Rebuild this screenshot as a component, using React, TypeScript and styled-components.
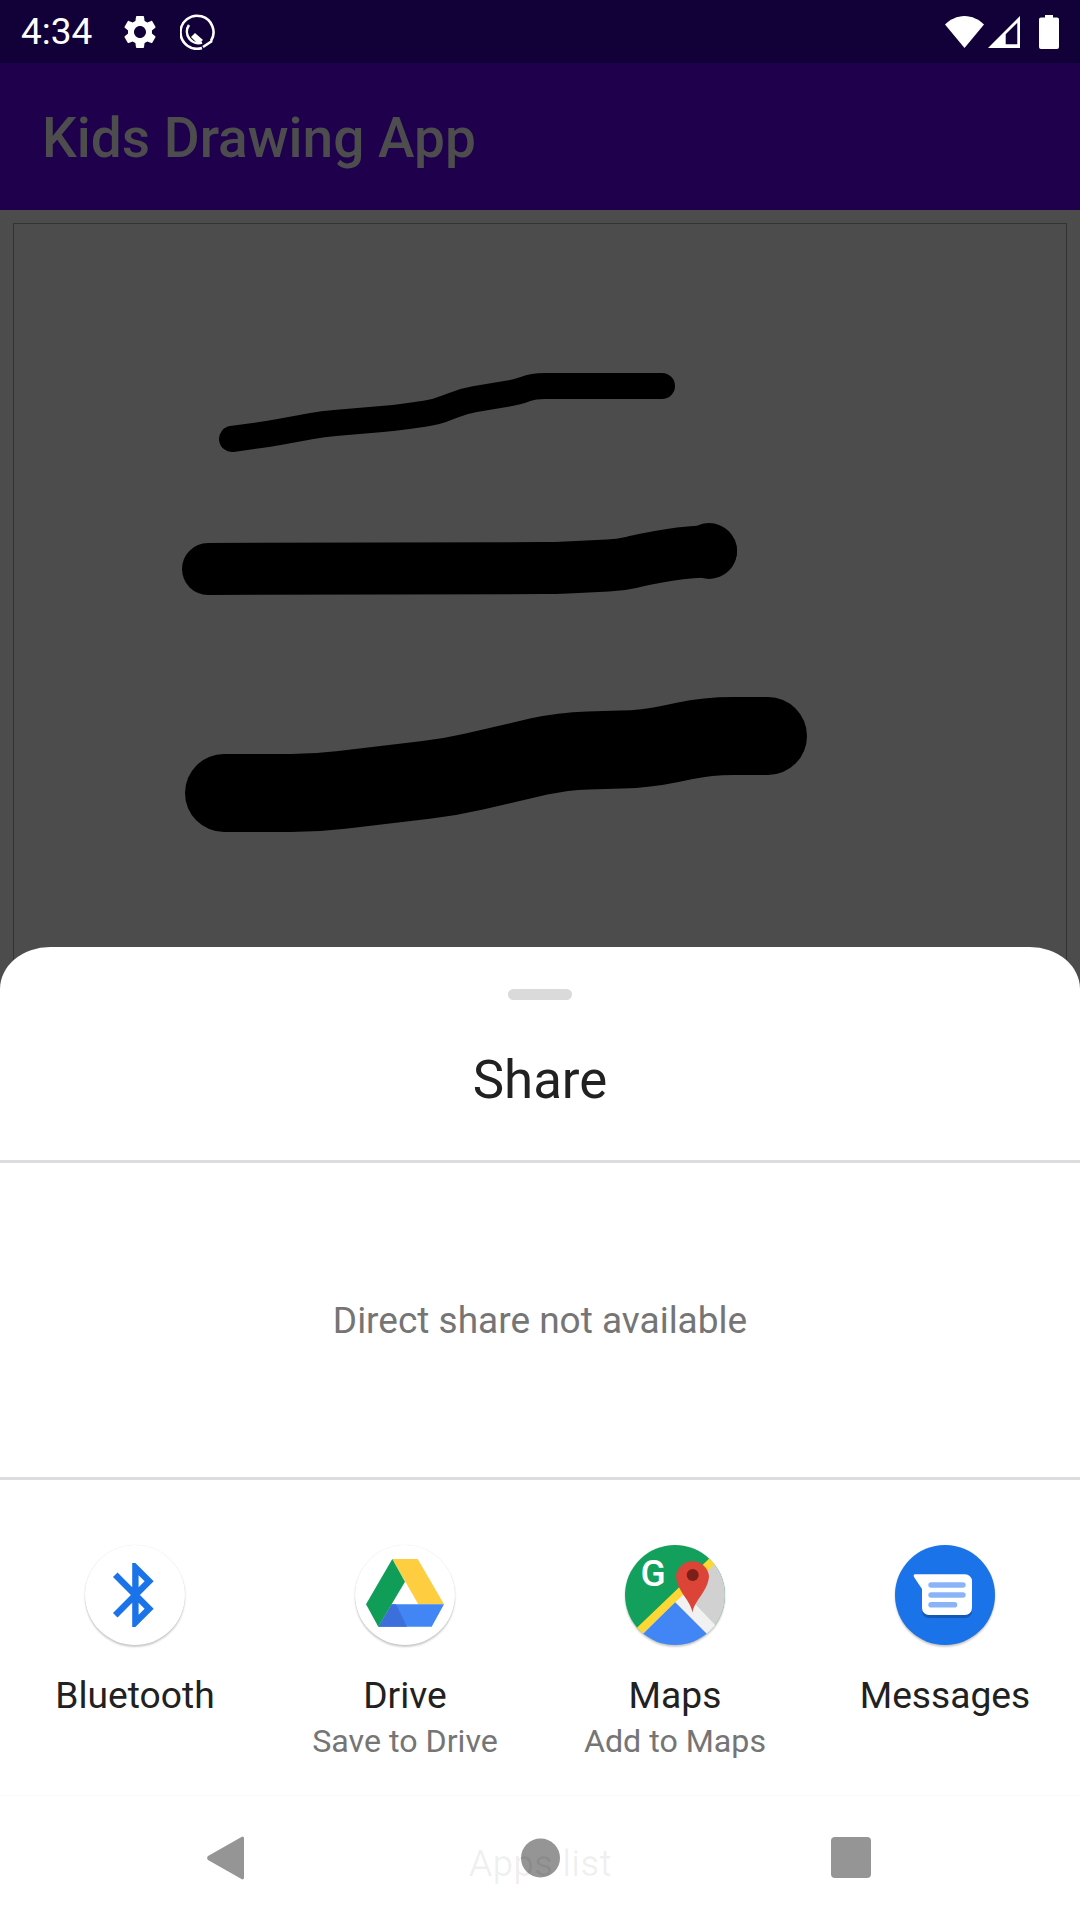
import React from "react";
import styled, { createGlobalStyle } from "styled-components";

const Global = createGlobalStyle`
  html, body { margin: 0; padding: 0; background: #fff; }
  #root { width: 1080px; height: 1920px; }
  * { box-sizing: border-box; }
`;

const Page = styled.div`
  position: relative;
  width: 1080px;
  height: 1920px;
  display: flex;
  flex-direction: column;
  overflow: hidden;
  background: #4c4c4c;
  font-family: Roboto, "Noto Sans", sans-serif;
`;

const StatusBar = styled.header`
  height: 63px;
  flex: none;
  display: flex;
  align-items: center;
  justify-content: space-between;
  padding: 0 21px;
  background: #120039;
  color: #fff;
`;

const StatusGroup = styled.div`
  display: flex;
  align-items: center;
`;

const Clock = styled.span`
  font-size: 37px;
  line-height: 63px;
  width: 84px;
`;

const StatusIcon = styled.svg<{ $w: number; $h: number; $ml: number }>`
  display: block;
  width: ${(p) => p.$w}px;
  height: ${(p) => p.$h}px;
  margin-left: ${(p) => p.$ml}px;
  fill: #fff;
`;

const AppBar = styled.div`
  height: 147px;
  flex: none;
  display: flex;
  align-items: center;
  padding: 2px 0 0 42px;
  background: #1f004c;
`;

const AppTitle = styled.h1`
  margin: 0;
  font-size: 55px;
  font-weight: 500;
  color: #4d4d4d;
`;

const CanvasArea = styled.main`
  flex: 1;
  min-height: 0;
  padding: 13px 13px 0;
  display: flex;
`;

const DrawingCanvas = styled.div`
  flex: 1;
  min-width: 0;
  border: 1px solid #333;
  border-bottom: 0;
`;

const Strokes = styled.svg`
  display: block;
  width: 1052px;
  height: 723px;
`;

const Sheet = styled.section`
  position: absolute;
  left: 0;
  right: 0;
  top: 947px;
  bottom: 0;
  background: #fff;
  border-radius: 50px 50px 0 0 / 42px 42px 0 0;
  display: flex;
  flex-direction: column;
`;

const Handle = styled.div`
  flex: none;
  width: 64px;
  height: 11px;
  margin: 42px auto 0;
  border-radius: 6px;
  background: #dadada;
`;

const SheetTitle = styled.h2`
  flex: none;
  height: 160px;
  margin: 0;
  display: flex;
  align-items: center;
  justify-content: center;
  font-size: 52.8px;
  font-weight: 400;
  color: #212121;
`;

const Divider = styled.hr`
  flex: none;
  width: 100%;
  height: 3px;
  margin: 0;
  border: 0;
  background: #dadce0;
`;

const DirectShare = styled.div`
  flex: none;
  height: 314px;
  display: flex;
  align-items: center;
  justify-content: center;
  font-size: 37px;
  color: #757575;
`;

const AppsRow = styled.div`
  flex: none;
  height: 315px;
  padding-top: 65px;
  display: grid;
  grid-template-columns: repeat(4, 270px);
  align-content: start;
`;

const AppCell = styled.div`
  display: flex;
  flex-direction: column;
  align-items: center;
`;

const IconDisc = styled.div<{ $bg: string }>`
  width: 100px;
  height: 100px;
  border-radius: 50%;
  overflow: hidden;
  background: ${(p) => p.$bg};
  box-shadow: 0 2px 2px rgba(0, 0, 0, 0.2), 0 0 1px rgba(0, 0, 0, 0.14);
`;

const IconArt = styled.svg`
  display: block;
  width: 100px;
  height: 100px;
`;

const AppLabel = styled.div`
  margin-top: 26px;
  font-size: 37.2px;
  line-height: 48px;
  color: #212121;
`;

const AppSub = styled.div`
  font-size: 32.2px;
  line-height: 44px;
  color: #757575;
`;

const NavBar = styled.nav`
  position: relative;
  flex: 1;
  display: flex;
  align-items: center;
  border-top: 1px solid #f8fbfa;
`;

const GhostLabel = styled.span`
  position: absolute;
  left: 0;
  right: 0;
  top: 46px;
  text-align: center;
  font-size: 37px;
  line-height: 44px;
  color: rgba(0, 0, 0, 0.06);
`;

const NavGlyph = styled.svg<{ $x: number; $w: number }>`
  position: absolute;
  left: ${(p) => p.$x}px;
  top: 40px;
  width: ${(p) => p.$w}px;
  height: 44px;
  fill: #959595;
`;

const softened = (pts: number[][], radius: number) => {
  let d = `M${pts[0][0]} ${pts[0][1]}`;
  for (let i = 1; i < pts.length - 1; i++) {
    const [px, py] = pts[i - 1];
    const [x, y] = pts[i];
    const [nx, ny] = pts[i + 1];
    const inLen = Math.hypot(x - px, y - py);
    const outLen = Math.hypot(nx - x, ny - y);
    const a = Math.min(radius, inLen / 2) / inLen;
    const b = Math.min(radius, outLen / 2) / outLen;
    d += `L${x - (x - px) * a} ${y - (y - py) * a}`;
    d += `Q${x} ${y} ${x + (nx - x) * b} ${y + (ny - y) * b}`;
  }
  const last = pts[pts.length - 1];
  return `${d}L${last[0]} ${last[1]}`;
};

const strokeOne = [[232, 439], [268, 434], [323, 424], [394, 418], [437, 412], [463, 401], [518, 392], [533, 386], [662, 386]];
const strokeTwo = [[208, 569], [555, 568], [620, 565], [646, 559], [680, 553], [711, 551]];
const strokeThree = [[224, 793], [316, 793], [450, 777], [563, 751], [646, 749], [708, 736], [768, 736]];

const BluetoothArt = () => (
  <IconArt viewBox="0 0 100 100">
    <path
      transform="translate(12 11.6) scale(3.2)"
      fill="#1a73e8"
      d="M17.71 7.71L12 2h-1v7.59L6.41 5 5 6.41 10.59 12 5 17.59 6.41 19 11 14.41V22h1l5.71-5.71-4.3-4.29 4.3-4.29zM13 5.83l1.88 1.88L13 9.59V5.83zm1.88 10.46L13 18.17v-3.76l1.88 1.88z"
    />
  </IconArt>
);

const DriveArt = () => (
  <IconArt viewBox="0 0 100 100">
    <polygon fill="#ffcd40" points="37.3,14 62.7,14 89,59.3 63.3,59.3" />
    <polygon fill="#4285f4" points="36.7,59.3 89,59.3 76.7,81.7 23.3,81.7" />
    <polygon fill="#3d6fdc" points="36.7,59.3 41,59.3 52,81.7 23.3,81.7" />
    <polygon fill="#0f9d58" points="37.3,14 50,36.7 23.3,81.7 11,59.3" />
  </IconArt>
);

const MapsArt = () => (
  <IconArt viewBox="0 0 100 100">
    <rect width="100" height="100" fill="#12a05c" />
    <polygon fill="#d1d1d1" points="15,85 88,15 110,5 110,110 15,110" />
    <polygon fill="#f1f1f1" points="44,56 56,44 92,82 84,92" />
    <polygon fill="#4285f4" points="50,57 95,102 5,102" />
    <line x1="5" y1="95" x2="98" y2="6" stroke="#fdd835" strokeWidth="8" />
    <text x="28" y="41" textAnchor="middle" fontFamily="Roboto, sans-serif" fontWeight="500" fontSize="37" fill="#fff">G</text>
    <path fill="#db4437" d="M67.5 68C66 55 52 47 51 31a16.6 16.6 0 0 1 33 0C83 47 69 55 67.5 68z" />
    <circle cx="67.7" cy="30" r="6" fill="#7b1f18" />
  </IconArt>
);

const MessagesArt = () => (
  <IconArt viewBox="0 0 100 100">
    <g transform="translate(-10 0)">
      <path fill="#1658b8" d="M37 44v22a7 7 0 0 0 7 7h36a7 7 0 0 0 7-7v-8z" />
      <path fill="#fff" d="M30 29.3h50a7 7 0 0 1 7 7V63a7 7 0 0 1-7 7H44a7 7 0 0 1-7-7V44L29 32q-1-2.700 1-2.700z" />
      <g fill="#8ab4f8">
        <rect x="43.300" y="37.200" width="37.400" height="5.600" rx="2.800" />
        <rect x="43.300" y="47.200" width="37.400" height="5.600" rx="2.800" />
        <rect x="43.300" y="56.900" width="29" height="5.600" rx="2.800" />
      </g>
    </g>
  </IconArt>
);

const apps = [
  { name: "Bluetooth", bg: "#fff", art: <BluetoothArt /> },
  { name: "Drive", sub: "Save to Drive", bg: "#fff", art: <DriveArt /> },
  { name: "Maps", sub: "Add to Maps", bg: "#fff", art: <MapsArt /> },
  { name: "Messages", bg: "#1a73e8", art: <MessagesArt /> },
];

export default function App() {
  return (
    <Page>
      <Global />
      <StatusBar>
        <StatusGroup>
          <Clock>4:34</Clock>
          <StatusIcon $w={40} $h={40} $ml={15} viewBox="0 0 24 24">
            <path d="M19.14 12.94c.04-.3.06-.61.06-.94 0-.32-.02-.64-.07-.94l2.03-1.58c.18-.14.23-.41.12-.61l-1.92-3.32c-.12-.22-.37-.29-.59-.22l-2.39.96c-.5-.38-1.03-.7-1.62-.94l-.36-2.54c-.04-.24-.24-.41-.48-.41h-3.84c-.24 0-.43.17-.47.41l-.36 2.54c-.59.24-1.13.57-1.62.94l-2.39-.96c-.22-.08-.47 0-.59.22L2.74 8.87c-.12.21-.08.47.12.61l2.03 1.58c-.05.3-.09.63-.09.94s.02.64.07.94l-2.03 1.58c-.18.14-.23.41-.12.61l1.92 3.32c.12.22.37.29.59.22l2.39-.96c.5.38 1.03.7 1.62.94l.36 2.54c.05.24.24.41.48.41h3.84c.24 0 .44-.17.47-.41l.36-2.54c.59-.24 1.13-.56 1.62-.94l2.39.96c.22.08.47 0 .59-.22l1.92-3.32c.12-.22.07-.47-.12-.61l-2.01-1.58zM12 15.6c-1.98 0-3.6-1.62-3.6-3.6s1.62-3.6 3.6-3.6 3.6 1.62 3.6 3.6-1.62 3.6-3.6 3.6z" />
          </StatusIcon>
          <StatusIcon $w={36} $h={36} $ml={20} viewBox="0 0 36 36">
            <path fill="none" stroke="#fff" strokeWidth="2.6" d="M31 27A16.500 16.500 0 1 0 22 34" />
            <path fill="none" stroke="#fff" strokeWidth="2.6" d="M23 33L32 27" />
            <path fill="none" stroke="#fff" strokeWidth="2.6" d="M22 28.500A11.500 11.500 0 0 1 9 11" />
            <path d="M11 23L15 19L23 26L18 30z" />
          </StatusIcon>
        </StatusGroup>
        <StatusGroup>
          <StatusIcon $w={39} $h={32} $ml={0} viewBox="0 0 39 32">
            <path d="M19.500 32L0 8.500C5 3.500 12 0 19.500 0S34 3.500 39 8.500z" />
          </StatusIcon>
          <StatusIcon $w={32} $h={32} $ml={4} viewBox="0 0 32 32">
            <path fillRule="evenodd" d="M32 0V32H0zM29.300 6.700L17.700 18.300V28.300H29.300z" />
          </StatusIcon>
          <StatusIcon $w={20} $h={34} $ml={19} viewBox="0 0 20 34">
            <path d="M6 0h8v2.500h4a2 2 0 0 1 2 2V32a2 2 0 0 1-2 2H2a2 2 0 0 1-2-2V4.500a2 2 0 0 1 2-2h4z" />
          </StatusIcon>
        </StatusGroup>
      </StatusBar>
      <AppBar>
        <AppTitle>Kids Drawing App</AppTitle>
      </AppBar>
      <CanvasArea>
        <DrawingCanvas>
          <Strokes viewBox="14 224 1052 723" fill="none" stroke="#000" strokeLinecap="round" strokeLinejoin="round">
            <path strokeWidth="26" d={softened(strokeOne, 12)} />
            <path strokeWidth="52" d={softened(strokeTwo, 12)} />
            <circle cx="709" cy="551" r="28" fill="#000" stroke="none" />
            <path strokeWidth="78" d={softened(strokeThree, 25)} />
          </Strokes>
        </DrawingCanvas>
      </CanvasArea>
      <Sheet>
        <Handle />
        <SheetTitle>Share</SheetTitle>
        <Divider />
        <DirectShare>Direct share not available</DirectShare>
        <Divider />
        <AppsRow>
          {apps.map((a) => (
            <AppCell key={a.name}>
              <IconDisc $bg={a.bg}>{a.art}</IconDisc>
              <AppLabel>{a.name}</AppLabel>
              {a.sub && <AppSub>{a.sub}</AppSub>}
            </AppCell>
          ))}
        </AppsRow>
        <NavBar>
          <NavGlyph $x={207} $w={37} viewBox="0 0 37 44">
            <path d="M37 2V42a1.500 1.500 0 0 1-2.500 1L1 24a3 3 0 0 1 0-4L34.500 1a1.500 1.500 0 0 1 2.500 1z" />
          </NavGlyph>
          <NavGlyph $x={521} $w={39} viewBox="0 0 39 44">
            <circle cx="19.500" cy="22" r="19.500" />
          </NavGlyph>
          <NavGlyph $x={831} $w={40} viewBox="0 0 40 44">
            <rect y="1" width="40" height="41" rx="4" />
          </NavGlyph>
          <GhostLabel>Apps list</GhostLabel>
        </NavBar>
      </Sheet>
    </Page>
  );
}
